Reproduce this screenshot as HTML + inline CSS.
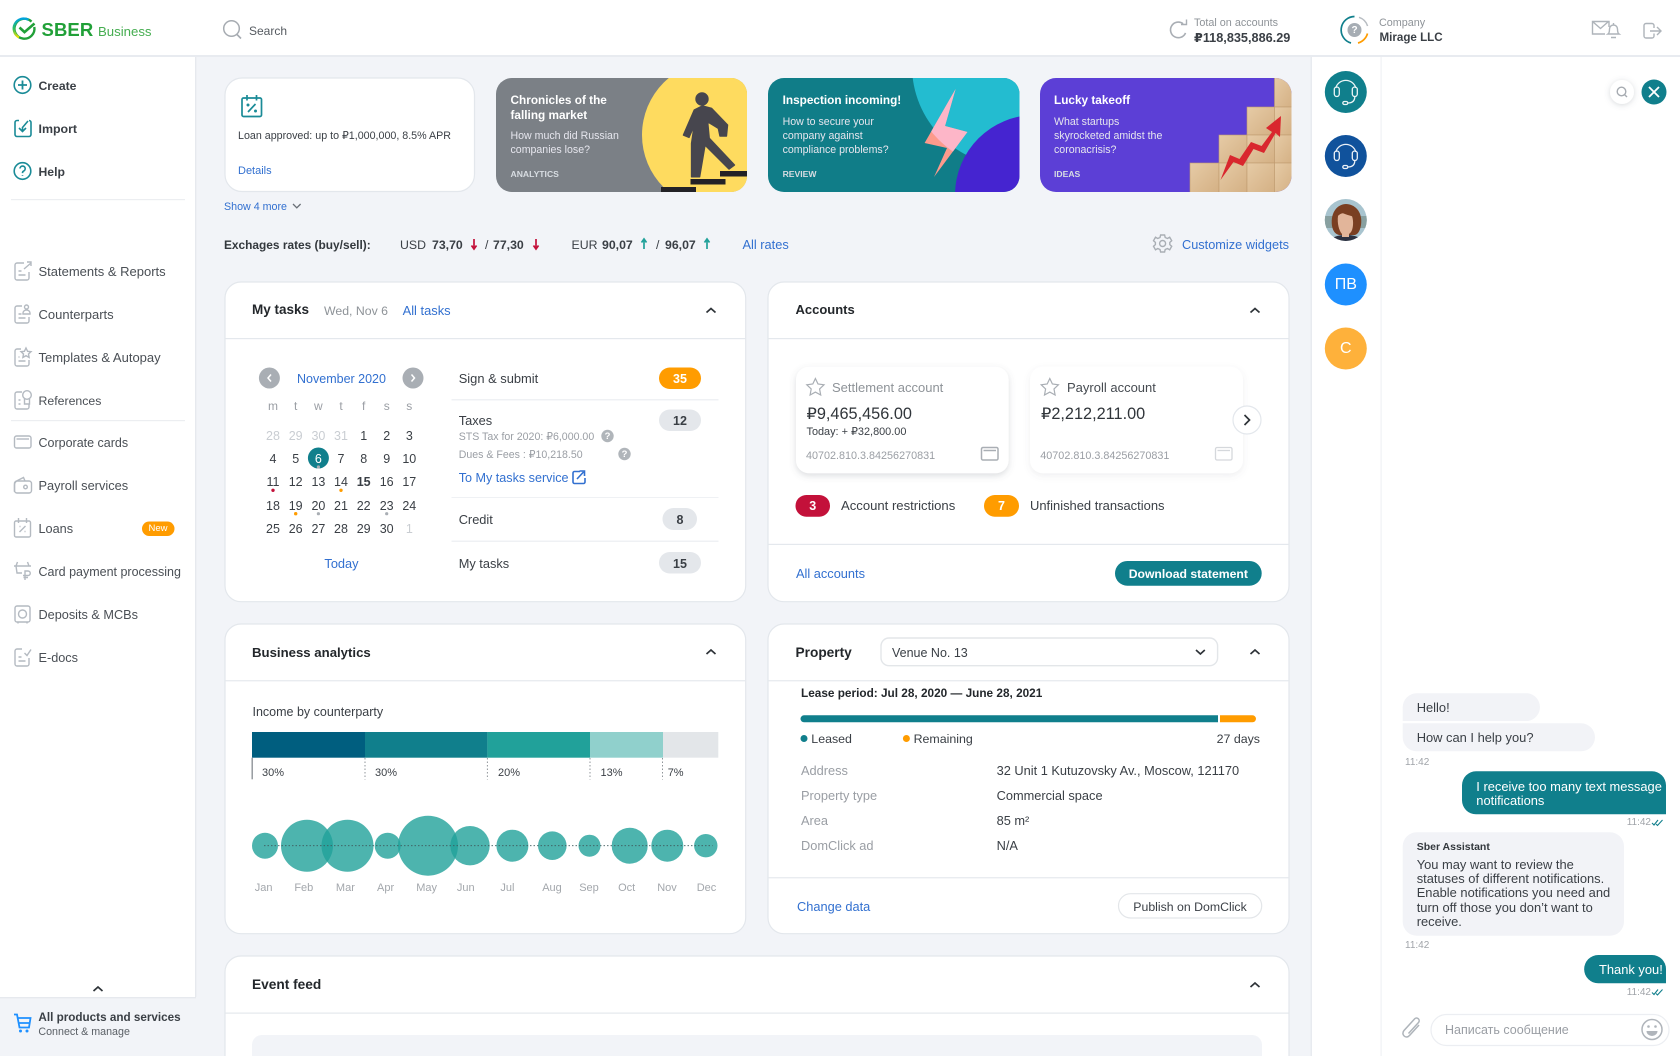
<!DOCTYPE html>
<html lang="en"><head><meta charset="utf-8"><title>SBER Business</title>
<style>
html,body{margin:0;padding:0;width:1680px;height:1056px;overflow:hidden;background:#f2f4f8}
body{font-family:"Liberation Sans","DejaVu Sans",sans-serif;color:#3a3f45;font-size:12.8px;position:relative}
svg.bg{position:absolute;left:0;top:0}
.t{position:absolute;white-space:nowrap;line-height:16px;height:16px;margin-top:-7.5px}
.c{transform:translateX(-50%)}
.b{font-weight:700}
.l{color:#3270d0}
.g{color:#9a9ea4}
.d{color:#23272b}
.p{font-size:10.6px;color:#e6e6ee}
.h{font-size:11.8px;font-weight:700;color:#fff}
.s{font-size:8.6px;font-weight:700;color:#d8dde2}
.n{font-size:12.7px;left:38.5px;color:#4a4f55}
.m{font-size:12.5px;color:#3a3f45}
.f{font-size:12.5px;color:#c9cdd2}
.mo{font-size:11px;color:#a3a7ac}
.chat{font-size:12.9px;color:#3a3f45}
.tm{font-size:10px;color:#a0a4a9}
.w{color:#fff!important}
</style></head><body>
<svg class="bg" width="1680" height="1056" viewBox="0 0 1680 1056" xmlns="http://www.w3.org/2000/svg">
<defs>
<filter id="sh" x="-10%" y="-15%" width="120%" height="135%"><feDropShadow dx="0" dy="2.5" stdDeviation="3.5" flood-color="#5a6672" flood-opacity=".22"/></filter>
<filter id="sh2" x="-10%" y="-15%" width="120%" height="135%"><feDropShadow dx="0" dy="2.5" stdDeviation="3.5" flood-color="#5a6672" flood-opacity=".1"/></filter>
<filter id="sh3" x="-40%" y="-40%" width="180%" height="180%"><feDropShadow dx="0" dy="1" stdDeviation="3" flood-color="#5a6672" flood-opacity=".25"/></filter>
<clipPath id="p1"><rect x="496" y="78" width="251" height="114" rx="16"/></clipPath>
<clipPath id="p2"><rect x="768" y="78" width="251.5" height="114" rx="16"/></clipPath>
<clipPath id="p3"><rect x="1040" y="78" width="251.5" height="114" rx="16"/></clipPath>
<clipPath id="cy"><circle cx="1012" cy="66" r="104"/></clipPath>
<clipPath id="av"><circle cx="1345.8" cy="220" r="21"/></clipPath>
<linearGradient id="lg" x1="0" y1="0" x2="0" y2="1"><stop offset="0" stop-color="#00a3e0"/><stop offset=".55" stop-color="#2fc05a"/><stop offset="1" stop-color="#efe100"/></linearGradient>
<linearGradient id="wd" x1="0" y1="0" x2="1" y2="1"><stop offset="0" stop-color="#e6cba6"/><stop offset="1" stop-color="#d4b084"/></linearGradient>
</defs>

<!-- header -->
<rect x="0" y="0" width="1680" height="55" fill="#fff"/>
<rect x="0" y="55" width="1680" height="2" fill="#e8ebf0"/>
<path d="M31.5 21.6A10 10 0 1 0 34.3 27" fill="none" stroke="#21a038" stroke-width="2.4"/>
<path d="M28.5 19.8A10 10 0 0 0 19 37.4" fill="none" stroke="url(#lg)" stroke-width="2.4"/>
<path d="M19.5 27.5l5 4.6 10-8.6" fill="none" stroke="#21a038" stroke-width="2.6"/>
<circle cx="231.5" cy="28.5" r="7.8" fill="none" stroke="#a6abb1" stroke-width="1.5"/><path d="M237 34.5l4 4" stroke="#a6abb1" stroke-width="1.6"/>
<path d="M1184.5 25.5A7.8 7.8 0 1 0 1184.5 35" fill="none" stroke="#a9aeb4" stroke-width="1.6" transform="rotate(-15 1177 30)"/><path d="M1181 24.5h5.5v-5" fill="none" stroke="#a9aeb4" stroke-width="1.4"/>
<path d="M1354.5 16.5A13.5 13.5 0 0 0 1351 43" fill="none" stroke="#107f8c" stroke-width="1.7"/>
<path d="M1358 43A13.5 13.5 0 0 0 1367.5 33.5" fill="none" stroke="#ff9c00" stroke-width="1.7"/>
<path d="M1359 17.3A13.5 13.5 0 0 1 1367.6 26" fill="none" stroke="#b8bdc2" stroke-width="1.5"/>
<circle cx="1354.5" cy="30" r="7" fill="#a6adb4"/>
<g fill="none" stroke="#aeb4ba" stroke-width="1.4">
<path d="M1605 34h-12.5V21.5h16.5V27M1592.5 21.5l8 7 8-7"/>
<path d="M1608 34c1.5-1 1.5-3 1.5-5a4 4 0 0 1 8 0c0 2 0 4 1.5 5zM1611 37.5h5M1613.5 23v2"/>
<path d="M1654 28v-2.5a2 2 0 0 0-2-2h-6a2 2 0 0 0-2 2V36a2 2 0 0 0 2 2h6a2 2 0 0 0 2-2v-2.5M1650 31h11M1657 27l4 4-4 4"/>
</g>

<!-- sidebar -->
<rect x="0" y="57" width="195" height="940" fill="#fff"/>
<rect x="195" y="57" width="1.4" height="940" fill="#e6e9ee"/>
<rect x="0" y="997" width="196" height="1.4" fill="#e6e9ee"/>
<rect x="11" y="199" width="174" height="1.2" fill="#eceef1"/>
<rect x="11" y="420" width="174" height="1.2" fill="#eceef1"/>
<g fill="none" stroke="#1a8b97" stroke-width="1.6">
<circle cx="22.5" cy="85" r="8.3"/><path d="M22.5 80.5v9M18 85h9" stroke-width="1.8"/>
<path d="M19 120.5h-2a2 2 0 0 0-2 2v12a2 2 0 0 0 2 2h12a2 2 0 0 0 2-2v-12a2 2 0 0 0-2-2M28 121l-5.5 6.5v4M19 128l3.5 3.5 3.5-3.5"/>
<circle cx="22.5" cy="171" r="8.3"/><path d="M20 168.5a2.6 2.6 0 1 1 3.5 2.6c-.8.4-1 1-1 2M22.5 175v.8"/>
</g>
<g fill="none" stroke="#b4bac1" stroke-width="1.4">
<g transform="translate(0,271)"><path d="M24-8h-7a2 2 0 0 0-2 2V7a2 2 0 0 0 2 2h10a2 2 0 0 0 2-2V1M18.5 0h3M18.5 4h7M24-2l7-6M27-9h4v4"/></g>
<g transform="translate(0,314)"><path d="M22-8h-5a2 2 0 0 0-2 2V7a2 2 0 0 0 2 2h10a2 2 0 0 0 2-2V3M18.5 0h3M18.5 4h7"/><circle cx="26.5" cy="-7" r="2"/><path d="M23-1a3.5 3 0 0 1 7 0v1h-7z"/></g>
<g transform="translate(0,357)"><path d="M21-8h-4a2 2 0 0 0-2 2V7a2 2 0 0 0 2 2h10a2 2 0 0 0 2-2V3M18.5 0h1M18.5 4h7M26-9l1.600 3.300 3.400.4-2.500 2.300.6 3.400-3.100-1.700-3.100 1.700.6-3.400-2.500-2.300 3.400-.4z"/></g>
<g transform="translate(0,400)"><path d="M22-8h-5a2 2 0 0 0-2 2V7a2 2 0 0 0 2 2h10a2 2 0 0 0 2-2V4M18.500 0h2M18.500 4h2"/><circle cx="27" cy="-5" r="4.300"/><path d="M24.500-1v5h5v-5"/></g>
<g transform="translate(0,442)"><rect x="14.500" y="-6" width="16.500" height="12" rx="2"/><path d="M16.500-3h12.500"/></g>
<g transform="translate(0,485)"><path d="M14.500 7V0c0-2 1-3.500 3-4.500l6-3 1.500 3.500"/><rect x="14.500" y="-4" width="17" height="12" rx="2.500"/><circle cx="25.500" cy="2" r="1.800"/></g>
<g transform="translate(0,528)"><rect x="14.500" y="-7" width="16" height="16" rx="1.500"/><path d="M18.500-10v5M26.500-10v5M19.500 4l6-6M19.500-1.500h1M24.500 3.500h1"/></g>
<g transform="translate(0,571)"><path d="M14-5h17M17.500-9l-1.500 4 1 7h5M27.500-9l1.500 4M25 9V0h3a2 2 0 0 1 0 4.500h-5M23.500 6.500h4.500"/></g>
<g transform="translate(0,614)"><rect x="15" y="-8" width="15" height="16" rx="2"/><circle cx="22.500" cy="0" r="4"/><path d="M18 8v1.500M27 8v1.500"/></g>
<g transform="translate(0,657)"><path d="M22-8h-5a2 2 0 0 0-2 2V7a2 2 0 0 0 2 2h10a2 2 0 0 0 2-2V1M18.500 0h3M18.500 4h7M24.500-4l2.500 2.500 4-6"/></g>
</g>
<rect x="142" y="521.500" width="32.500" height="14.500" rx="7.200" fill="#ff9c00"/>
<path d="M93.500 991l4.500-4 4.500 4" fill="none" stroke="#2e3338" stroke-width="1.700"/>
<g fill="none" stroke="#1e90ff" stroke-width="1.800"><path d="M14 1014.500h3l2.500 13h9.500l1.500-9.500h-13M19 1023h10"/></g>
<circle cx="20.500" cy="1031" r="1.500" fill="#1e90ff"/><circle cx="27" cy="1031" r="1.500" fill="#1e90ff"/>

<!-- right panels -->
<rect x="1311" y="57" width="369" height="1000" fill="#fff"/>
<rect x="1310.500" y="57" width="1.500" height="1000" fill="#e8ebf0"/>
<rect x="1380.500" y="57" width="1.200" height="1000" fill="#f0f2f5"/>
<circle cx="1345.800" cy="92" r="21" fill="#107f8c"/>
<circle cx="1345.800" cy="156" r="21" fill="#10529c"/>
<g fill="none" stroke="#fff" stroke-width="1.300" opacity=".92">
<g transform="translate(1345.800,90)"><path d="M-10-2A10.300 10 0 0 1 10-2"/><rect x="-11.500" y="-3" width="5" height="9.500" rx="2.500"/><rect x="6.500" y="-3" width="5" height="9.500" rx="2.500"/><path d="M9 6.500c0 5-3 6.500-7 6.500"/><rect x="-3" y="11.500" width="5" height="3" rx="1.500"/></g>
<g transform="translate(1345.800,154)"><path d="M-10-2A10.300 10 0 0 1 10-2"/><rect x="-11.500" y="-3" width="5" height="9.500" rx="2.500"/><rect x="6.500" y="-3" width="5" height="9.500" rx="2.500"/><path d="M9 6.500c0 5-3 6.500-7 6.500"/><rect x="-3" y="11.500" width="5" height="3" rx="1.500"/></g>
</g>
<g clip-path="url(#av)">
<rect x="1324" y="198" width="44" height="44" fill="#a8c4cf"/>
<rect x="1324" y="216" width="44" height="12" fill="#88a0a0"/>
<path d="M1330 243c0-6 8-8 16-8s16 2 16 8z" fill="#2c3140"/>
<path d="M1332 226c-2-14 6-22 14-22s17 7 15 21c-1 6-3 9-6 10h-16c-4-1-6-4-7-9z" fill="#7a3f22"/>
<path d="M1338 216c3-4 11-4 14 0 2 6 1 13-1 16-2 3-6 4-9 2-3-3-5-11-4-18z" fill="#e2b59a"/>
<path d="M1340 211c4 4 10 4 17 7-1-7-6-11-10-11s-7 2-7 4z" fill="#7a3f22"/>
<rect x="1342" y="233" width="7" height="4" fill="#e2b59a"/>
</g>
<circle cx="1345.800" cy="284.500" r="21" fill="#1e90ff"/>
<circle cx="1345.800" cy="348.500" r="21" fill="#feb13b"/>
<circle cx="1622" cy="92" r="12" fill="#fff" filter="url(#sh3)"/>
<circle cx="1621.500" cy="91.500" r="4.300" fill="none" stroke="#a6abb1" stroke-width="1.400"/><path d="M1624.700 94.700l2.300 2.300" stroke="#a6abb1" stroke-width="1.400"/>
<circle cx="1654" cy="92" r="12.500" fill="#107f8c"/><path d="M1649 87l10 10M1659 87l-10 10" stroke="#fff" stroke-width="1.800"/>

<!-- chat -->
<path d="M1402.700 707.300a14 14 0 0 1 14-14H1528a14 14 0 0 1 0 27.700H1402.700z" fill="#f2f3f7"/>
<path d="M1402.700 723.300H1581a14 14 0 0 1 0 28H1416.700a14 14 0 0 1-14-14z" fill="#f2f3f7"/>
<path d="M1476 771.300h176a14 14 0 0 1 14 14v29h-190a14 14 0 0 1-14-14v-15a14 14 0 0 1 14-14z" fill="#107f8c"/>
<path d="M1402.700 846.300a14 14 0 0 1 14-14H1610a14 14 0 0 1 14 14v75.400a14 14 0 0 1-14 14H1416.700a14 14 0 0 1-14-14z" fill="#f2f3f7"/>
<path d="M1598.300 955H1652a14 14 0 0 1 14 14v14.300h-67.700a14 14 0 0 1 0-28.300z" fill="#107f8c"/>
<g fill="none" stroke="#107f8c" stroke-width="1.100"><path d="M1652 823l2 2 4-5M1656 824l1.500 1.500 5-5.500M1652 992.500l2 2 4-5M1656 993.500l1.500 1.500 5-5.500"/></g>
<path d="M1417.500 1023l-9.500 10.500c-3.500 4-9-1-5.500-5l10.500-11.500c2.300-2.700 6.300.8 4 3.500l-10 11" fill="none" stroke="#aeb4ba" stroke-width="1.500" transform="translate(1.500,2)"/>
<rect x="1431" y="1014.500" width="238" height="31" rx="15.500" fill="#fff" stroke="#eceef2" stroke-width="1.200"/>
<circle cx="1652" cy="1029.500" r="10" fill="none" stroke="#b0b5bb" stroke-width="1.500"/>
<circle cx="1648.500" cy="1026.500" r="1.300" fill="#b0b5bb"/><circle cx="1655.500" cy="1026.500" r="1.300" fill="#b0b5bb"/>
<path d="M1646.500 1031h11a5.500 5 0 0 1-11 0z" fill="#b0b5bb"/>

<!-- loan card -->
<rect x="225" y="78" width="249.500" height="113.500" rx="17" fill="#fff" stroke="#e3e7ec" stroke-width="1.200"/>
<g fill="none" stroke="#1a8b97" stroke-width="1.700"><rect x="242" y="98" width="19.500" height="18.500" rx="1.500"/><path d="M247 95v5.500M256.500 95v5.500M248 112l7.500-8"/></g>
<circle cx="248" cy="105" r="1.500" fill="#1a8b97"/><circle cx="255.500" cy="111" r="1.500" fill="#1a8b97"/>
<path d="M293 204l3.800 3.800 3.800-3.800" fill="none" stroke="#6a7077" stroke-width="1.300"/>

<!-- promo 1 -->
<g clip-path="url(#p1)">
<rect x="496" y="78" width="251" height="114" fill="#7b8086"/>
<circle cx="716" cy="135" r="74" fill="#fedb5f"/>
<rect x="720" y="78" width="30" height="114" fill="#fedb5f"/>
<circle cx="702" cy="99" r="6.700" fill="#47464e"/>
<polygon points="702.300,106 711.400,108.300 727.500,125 726.400,136 720,136 718.400,128.300 707.600,121.700 709.200,138.300 734.400,165 729,169 705,145 699.600,176.700 691.600,176.700 691.600,143.300 694.300,125 689,137.300 683.500,135 694.300,110" fill="#47464e" stroke="#47464e" stroke-width="1.500" stroke-linejoin="round"/>
<rect x="661" y="187" width="35" height="5" fill="#232226"/>
<rect x="690.500" y="179" width="35" height="5.500" fill="#232226"/>
<rect x="720" y="171" width="28" height="5.500" fill="#232226"/>
</g>

<!-- promo 2 -->
<g clip-path="url(#p2)">
<rect x="768" y="78" width="252" height="114" fill="#107d88"/>
<circle cx="1012" cy="66" r="100" fill="#23bcd0"/>
<circle cx="1035" cy="195" r="80" fill="#4524d0"/>
<polygon points="955.600,89 924.600,143 947,148 934,177 967.400,132 945,126" fill="#fc9a8c"/>
<polygon points="955.600,89 924.600,143 947,148 934,177 967.400,132 945,126" fill="#fdb6c8" clip-path="url(#cy)"/>
</g>

<!-- promo 3 -->
<g clip-path="url(#p3)">
<rect x="1040" y="78" width="252" height="114" fill="#5c3fd6"/>
<g fill="url(#wd)" stroke="#be9a6e" stroke-width=".6">
<rect x="1274.500" y="76" width="18" height="31"/>
<rect x="1247" y="107" width="27.500" height="28"/><rect x="1274.500" y="107" width="18" height="28"/>
<rect x="1219" y="135" width="28" height="28"/><rect x="1247" y="135" width="27.500" height="28"/><rect x="1274.500" y="135" width="18" height="28"/>
<rect x="1190" y="163" width="29" height="30"/><rect x="1219" y="163" width="28" height="30"/><rect x="1247" y="163" width="27.500" height="30"/><rect x="1274.500" y="163" width="18" height="30"/>
</g>
<polygon points="1220.500,180 1230,155 1239.500,159 1251,142 1261.600,146 1272,132 1266,128 1281,116 1280,137 1275.600,133 1264,153 1253.500,149 1243,166 1233.500,162" fill="#d9272e"/>
</g>

<!-- rates -->
<g fill="none" stroke-width="1.700">
<g stroke="#c3113a"><path d="M474 239v10M471.500 245.500l2.500 3.500 2.500-3.500"/><path d="M536 239v10M533.500 245.500l2.500 3.500 2.500-3.500"/></g>
<g stroke="#21a19a"><path d="M644 249v-10M641.500 242.500l2.500-3.500 2.500 3.500"/><path d="M707 249v-10M704.500 242.500l2.500-3.500 2.500 3.500"/></g>
</g>
<g transform="translate(1162.600,243.500)" fill="none" stroke="#a9aeb4" stroke-width="1.400"><circle r="3"/><path d="M-2-8.500h4l.6 2.500 2.300 1 2.200-1.300 2 3.500-1.900 1.700v2.200l1.900 1.700-2 3.500-2.200-1.300-2.300 1-.6 2.500h-4l-.6-2.500-2.300-1-2.200 1.300-2-3.500 1.900-1.700v-2.200l-1.900-1.700 2-3.500 2.200 1.300 2.300-1z"/></g>

<!-- task card -->
<rect x="225" y="282" width="520.700" height="319.700" rx="16" fill="#fff" stroke="#e3e7ec" stroke-width="1.200"/>
<rect x="225.500" y="338" width="519.700" height="1.200" fill="#e4e8ed"/>
<path d="M706.500 312.500l4.500-4 4.500 4" fill="none" stroke="#2e3338" stroke-width="1.700"/>
<circle cx="269.400" cy="378" r="10.500" fill="#a9aeb4"/><circle cx="413" cy="378" r="10.500" fill="#a9aeb4"/>
<path d="M271 374.500l-3 3.500 3 3.500M411.500 374.500l3 3.500-3 3.500" fill="none" stroke="#fff" stroke-width="1.500"/>
<circle cx="318.400" cy="458" r="10.500" fill="#107f8c"/>
<circle cx="318.400" cy="467" r="1.600" fill="#a9aeb4"/>
<circle cx="273" cy="490.300" r="1.700" fill="#c3113a"/><circle cx="341" cy="490.300" r="1.700" fill="#ff9c00"/>
<circle cx="295.700" cy="513.700" r="1.700" fill="#ff9c00"/><circle cx="318.400" cy="513.700" r="1.600" fill="#a9aeb4"/><circle cx="386.700" cy="513.700" r="1.600" fill="#a9aeb4"/>
<rect x="659" y="367.500" width="42" height="21.500" rx="10.700" fill="#ff9c00"/>
<rect x="659" y="409.500" width="42" height="21.500" rx="10.700" fill="#e4e7eb"/>
<rect x="662.500" y="508" width="34.500" height="22" rx="11" fill="#e4e7eb"/>
<rect x="659" y="552" width="42" height="21.500" rx="10.700" fill="#e4e7eb"/>
<rect x="451.500" y="399" width="267" height="1.500" fill="#eff1f4"/>
<rect x="451.500" y="497" width="267" height="1" fill="#eff1f4"/>
<rect x="451.500" y="540.500" width="267" height="1.500" fill="#eff1f4"/>
<circle cx="607.500" cy="436" r="6.200" fill="#b0b5ba"/><circle cx="624.500" cy="454" r="6.200" fill="#b0b5ba"/>
<g fill="none" stroke="#3270d0" stroke-width="1.600"><path d="M580 471.500h-5.500a1.500 1.500 0 0 0-1.500 1.500v9a1.500 1.500 0 0 0 1.500 1.500h9a1.500 1.500 0 0 0 1.500-1.500v-4"/><path d="M577 479l6.500-7M579.500 471h5v5"/></g>

<!-- accounts -->
<rect x="768" y="282" width="521" height="319.700" rx="16" fill="#fff" stroke="#e3e7ec" stroke-width="1.200"/>
<rect x="768.500" y="338" width="520" height="1.200" fill="#e4e8ed"/>
<rect x="768.500" y="543.800" width="520" height="1.200" fill="#e4e8ed"/>
<path d="M1250.500 312.500l4.500-4 4.500 4" fill="none" stroke="#2e3338" stroke-width="1.700"/>
<rect x="796" y="366.700" width="212.600" height="106.600" rx="13" fill="#fff" filter="url(#sh)"/>
<rect x="1030" y="366.700" width="213" height="106.600" rx="13" fill="#fff" filter="url(#sh2)"/>
<g fill="none" stroke="#a9aeb4" stroke-width="1.200">
<path d="M815.400 378.500l2.600 5.500 6 .8-4.400 4.200 1.100 6-5.300-2.900-5.300 2.900 1.100-6-4.400-4.200 6-.8z"/>
<path d="M1049.800 378.500l2.600 5.500 6 .8-4.400 4.200 1.100 6-5.300-2.900-5.300 2.900 1.100-6-4.400-4.200 6-.8z"/>
<g stroke-width="1.500"><rect x="981.500" y="447.500" width="16.500" height="12.500" rx="1.500"/><path d="M983.500 450.500h12.500"/></g>
<g stroke="#d5d8dc" stroke-width="1.300"><rect x="1215.500" y="447.500" width="16.500" height="12.500" rx="1.500"/><path d="M1217.500 450.500h12.500"/></g>
</g>
<circle cx="1247" cy="420" r="14" fill="#fff" stroke="#e3e7ec" stroke-width="1.200"/>
<path d="M1244.500 415l5 5-5 5" fill="none" stroke="#2e3338" stroke-width="1.700"/>
<rect x="795.500" y="495" width="34.500" height="21.700" rx="10.800" fill="#c3113a"/>
<rect x="984" y="495" width="35" height="21.700" rx="10.800" fill="#ff9c00"/>
<rect x="1115" y="561" width="146.700" height="24.700" rx="12.300" fill="#107f8c"/>

<!-- analytics -->
<rect x="225" y="624" width="520.700" height="309.700" rx="16" fill="#fff" stroke="#e3e7ec" stroke-width="1.200"/>
<rect x="225.500" y="680" width="519.700" height="1.400" fill="#e9ecf0"/>
<path d="M706.500 654l4.500-4 4.500 4" fill="none" stroke="#2e3338" stroke-width="1.700"/>
<rect x="252" y="732" width="113" height="25.700" fill="#005e7f"/>
<rect x="365" y="732" width="122.400" height="25.700" fill="#107f8c"/>
<rect x="487.400" y="732" width="102.600" height="25.700" fill="#21a19a"/>
<rect x="590" y="732" width="73" height="25.700" fill="#90d0cc"/>
<rect x="663" y="732" width="55.300" height="25.700" fill="#e3e6e9"/>
<rect x="251.500" y="757.700" width="1.400" height="21.600" fill="#8f9499"/>
<g stroke="#8f9499" stroke-width="1" stroke-dasharray="1.500 2"><path d="M365 758v21.500M487.400 758v21.500M590 758v21.500M662.500 758v21.500"/></g>
<g fill="#21a19a" fill-opacity=".8">
<circle cx="265" cy="845.700" r="13"/><circle cx="307" cy="845.700" r="26"/><circle cx="347.500" cy="845.700" r="26"/><circle cx="387.700" cy="845.700" r="13"/><circle cx="428" cy="845.700" r="30"/><circle cx="470" cy="845.700" r="19.700"/><circle cx="512.400" cy="845.700" r="16"/><circle cx="552.300" cy="845.700" r="14.300"/><circle cx="589.500" cy="845.700" r="11"/><circle cx="629.700" cy="845.700" r="18"/><circle cx="667.300" cy="845.700" r="16"/><circle cx="705.800" cy="845.700" r="11.700"/>
</g>
<path d="M264 845.700H712.600" stroke="#3e5a5c" stroke-width=".9" stroke-dasharray="1.500 2"/>

<!-- property -->
<rect x="768" y="624" width="521" height="309.700" rx="16" fill="#fff" stroke="#e3e7ec" stroke-width="1.200"/>
<rect x="768.500" y="680" width="520" height="1.400" fill="#e9ecf0"/>
<rect x="768.500" y="877" width="520" height="1.400" fill="#e9ecf0"/>
<rect x="881" y="638" width="336.600" height="27.700" rx="8" fill="#fff" stroke="#e3e6e9" stroke-width="1.400"/>
<path d="M1196 650l4.400 4 4.400-4M1250.500 654l4.500-4 4.500 4" fill="none" stroke="#2e3338" stroke-width="1.700"/>
<path d="M804 715.300H1218v7H804a3.500 3.500 0 0 1 0-7z" fill="#107f8c"/>
<path d="M1220 715.300h32.500a3.500 3.500 0 0 1 0 7H1220z" fill="#ff9c00"/>
<circle cx="804" cy="738.500" r="3.500" fill="#107f8c"/><circle cx="906.400" cy="738.500" r="3.500" fill="#ff9c00"/>
<rect x="1118.500" y="893.700" width="143.200" height="24.300" rx="12.100" fill="#fff" stroke="#e3e6e9" stroke-width="1.200"/>

<!-- event -->
<rect x="225" y="956" width="1064" height="120" rx="16" fill="#fff" stroke="#e3e7ec" stroke-width="1.200"/>
<rect x="225.500" y="1012.500" width="1063" height="1.200" fill="#e4e8ed"/>
<path d="M1250.500 987l4.500-4 4.500 4" fill="none" stroke="#2e3338" stroke-width="1.700"/>
<rect x="252" y="1035" width="1010" height="40" rx="10" fill="#f2f4f8"/>
</svg>

<!-- TEXT -->
<div class="t b" style="left:41.500px;top:29.500px;font-size:18.500px;color:#21a038;letter-spacing:.1px">SBER</div>
<div class="t" style="left:98px;top:31px;font-size:13.200px;color:#45ad50">Business</div>
<div class="t" style="left:249px;top:30px;font-size:12px;color:#555a60">Search</div>
<div class="t" style="left:1194px;top:22px;font-size:10.800px;color:#8e9398">Total on accounts</div>
<div class="t b" style="left:1194px;top:37px;font-size:12.700px;color:#3a3f45">₽118,835,886.29</div>
<div class="t" style="left:1379px;top:22px;font-size:10.800px;color:#8e9398">Company</div>
<div class="t b" style="left:1379.500px;top:37px;font-size:11.600px;color:#3a3f45">Mirage LLC</div>
<div class="t b w c" style="left:1354.500px;top:30px;font-size:10px">?</div>

<div class="t b" style="left:38.500px;top:85px;font-size:12.200px">Create</div>
<div class="t b" style="left:38.500px;top:128px;font-size:12.400px">Import</div>
<div class="t b" style="left:38.500px;top:171px;font-size:12.200px">Help</div>
<div class="t n" style="top:271px;font-size:13px">Statements &amp; Reports</div>
<div class="t n" style="top:314px;font-size:13px">Counterparts</div>
<div class="t n" style="top:357px;font-size:13px">Templates &amp; Autopay</div>
<div class="t n" style="top:400px;font-size:12.300px">References</div>
<div class="t n" style="top:442.500px;font-size:12.500px">Corporate cards</div>
<div class="t n" style="top:485px;font-size:12.800px">Payroll services</div>
<div class="t n" style="top:528px">Loans</div>
<div class="t n" style="top:571px;font-size:12.500px">Card payment processing</div>
<div class="t n" style="top:614px">Deposits &amp; MCBs</div>
<div class="t n" style="top:657px">E-docs</div>
<div class="t c w" style="left:158px;top:528.500px;font-size:9.500px">New</div>
<div class="t b" style="left:38.400px;top:1017px;font-size:11.700px;color:#3a3f45">All products and services</div>
<div class="t" style="left:38.400px;top:1031px;font-size:10.700px;color:#5a5f65">Connect &amp; manage</div>

<div class="t" style="left:238px;top:135px;font-size:10.700px">Loan approved: up to ₽1,000,000, 8.5% APR</div>
<div class="t l" style="left:238px;top:170px;font-size:11px">Details</div>
<div class="t l" style="left:224px;top:206px;font-size:10.700px">Show 4 more</div>

<div class="t h" style="left:510.500px;top:99px">Chronicles of the</div>
<div class="t h" style="left:510.500px;top:114px">falling market</div>
<div class="t p" style="left:510.500px;top:135px">How much did Russian</div>
<div class="t p" style="left:510.500px;top:149px">companies lose?</div>
<div class="t s" style="left:510.500px;top:173px">ANALYTICS</div>
<div class="t h" style="left:782.600px;top:99px">Inspection incoming!</div>
<div class="t p" style="left:782.600px;top:121px">How to secure your</div>
<div class="t p" style="left:782.600px;top:135px">company against</div>
<div class="t p" style="left:782.600px;top:149px">compliance problems?</div>
<div class="t s" style="left:782.600px;top:173px">REVIEW</div>
<div class="t h" style="left:1054px;top:99px">Lucky takeoff</div>
<div class="t p" style="left:1054px;top:121px">What startups</div>
<div class="t p" style="left:1054px;top:135px">skyrocketed amidst the</div>
<div class="t p" style="left:1054px;top:149px">coronacrisis?</div>
<div class="t s" style="left:1054px;top:173px">IDEAS</div>

<div class="t b" style="left:224px;top:244px;font-size:11.900px;color:#33383d">Exchages rates (buy/sell):</div>
<div class="t" style="left:400px;top:244px;font-size:12.300px">USD</div>
<div class="t b" style="left:432px;top:244px;font-size:12.300px">73,70</div>
<div class="t" style="left:485px;top:244px;font-size:12.300px">/</div>
<div class="t b" style="left:493px;top:244px;font-size:12.300px">77,30</div>
<div class="t" style="left:571.500px;top:244px;font-size:12.300px">EUR</div>
<div class="t b" style="left:602px;top:244px;font-size:12.300px">90,07</div>
<div class="t" style="left:656px;top:244px;font-size:12.300px">/</div>
<div class="t b" style="left:665px;top:244px;font-size:12.300px">96,07</div>
<div class="t l" style="left:742.500px;top:244px;font-size:12.800px">All rates</div>
<div class="t l" style="left:1182px;top:244px;font-size:12.750px">Customize widgets</div>

<div class="t b d" style="left:252px;top:309px;font-size:13.500px">My tasks</div>
<div class="t" style="left:324px;top:310px;font-size:12.300px;color:#8e9398">Wed, Nov 6</div>
<div class="t l" style="left:402.600px;top:310px;font-size:12.900px">All tasks</div>
<div class="t l c" style="left:341.500px;top:378px;font-size:12.500px">November 2020</div>
<div class="t c g" style="left:273px;top:405.500px;font-size:12px">m</div><div class="t c g" style="left:295.700px;top:405.500px;font-size:12px">t</div><div class="t c g" style="left:318.400px;top:405.500px;font-size:12px">w</div><div class="t c g" style="left:341px;top:405.500px;font-size:12px">t</div><div class="t c g" style="left:363.700px;top:405.500px;font-size:12px">f</div><div class="t c g" style="left:386.700px;top:405.500px;font-size:12px">s</div><div class="t c g" style="left:409.300px;top:405.500px;font-size:12px">s</div>
<div class="t c f" style="left:273px;top:435px">28</div><div class="t c f" style="left:295.700px;top:435px">29</div><div class="t c f" style="left:318.400px;top:435px">30</div><div class="t c f" style="left:341px;top:435px">31</div><div class="t c m" style="left:363.700px;top:435px">1</div><div class="t c m" style="left:386.700px;top:435px">2</div><div class="t c m" style="left:409.300px;top:435px">3</div>
<div class="t c m" style="left:273px;top:458.500px">4</div><div class="t c m" style="left:295.700px;top:458.500px">5</div><div class="t c w" style="left:318.400px;top:458.500px;font-size:12.500px">6</div><div class="t c m" style="left:341px;top:458.500px">7</div><div class="t c m" style="left:363.700px;top:458.500px">8</div><div class="t c m" style="left:386.700px;top:458.500px">9</div><div class="t c m" style="left:409.300px;top:458.500px">10</div>
<div class="t c m" style="left:273px;top:481.500px">11</div><div class="t c m" style="left:295.700px;top:481.500px">12</div><div class="t c m" style="left:318.400px;top:481.500px">13</div><div class="t c m" style="left:341px;top:481.500px">14</div><div class="t c m b" style="left:363.700px;top:481.500px">15</div><div class="t c m" style="left:386.700px;top:481.500px">16</div><div class="t c m" style="left:409.300px;top:481.500px">17</div>
<div class="t c m" style="left:273px;top:505px">18</div><div class="t c m" style="left:295.700px;top:505px">19</div><div class="t c m" style="left:318.400px;top:505px">20</div><div class="t c m" style="left:341px;top:505px">21</div><div class="t c m" style="left:363.700px;top:505px">22</div><div class="t c m" style="left:386.700px;top:505px">23</div><div class="t c m" style="left:409.300px;top:505px">24</div>
<div class="t c m" style="left:273px;top:528px">25</div><div class="t c m" style="left:295.700px;top:528px">26</div><div class="t c m" style="left:318.400px;top:528px">27</div><div class="t c m" style="left:341px;top:528px">28</div><div class="t c m" style="left:363.700px;top:528px">29</div><div class="t c m" style="left:386.700px;top:528px">30</div><div class="t c f" style="left:409.300px;top:528px">1</div>
<div class="t l c" style="left:341.500px;top:563px;font-size:12.800px">Today</div>

<div class="t" style="left:458.700px;top:378px;font-size:12.900px">Sign &amp; submit</div>
<div class="t" style="left:458.700px;top:420px">Taxes</div>
<div class="t g" style="left:458.700px;top:436px;font-size:10.600px">STS Tax for 2020: ₽6,000.00</div>
<div class="t g" style="left:458.700px;top:454px;font-size:10.600px">Dues &amp; Fees : ₽10,218.50</div>
<div class="t l" style="left:458.700px;top:477px;font-size:12.600px">To My tasks service</div>
<div class="t" style="left:458.700px;top:519px">Credit</div>
<div class="t" style="left:458.700px;top:563px">My tasks</div>
<div class="t b c w" style="left:680px;top:378px;font-size:12.500px">35</div>
<div class="t b c" style="left:680px;top:420px;font-size:12.500px">12</div>
<div class="t b c" style="left:680px;top:519px;font-size:12.500px">8</div>
<div class="t b c" style="left:680px;top:563px;font-size:12.500px">15</div>
<div class="t b w c" style="left:607.500px;top:436px;font-size:9.500px">?</div>
<div class="t b w c" style="left:624.500px;top:454px;font-size:9.500px">?</div>

<div class="t b d" style="left:795.500px;top:309px;font-size:13px">Accounts</div>
<div class="t" style="left:832px;top:387px;font-size:13px;color:#8e9398">Settlement account</div>
<div class="t" style="left:1067px;top:387px;font-size:13px;color:#464b51">Payroll account</div>
<div class="t" style="left:806.500px;top:413.500px;font-size:16.300px;color:#30353a">₽9,465,456.00</div>
<div class="t" style="left:1041px;top:413.500px;font-size:16.300px;color:#30353a">₽2,212,211.00</div>
<div class="t" style="left:806.500px;top:431.700px;font-size:10.900px">Today: + ₽32,800.00</div>
<div class="t g" style="left:806px;top:455.700px;font-size:10.800px">40702.810.3.84256270831</div>
<div class="t g" style="left:1040.300px;top:455.700px;font-size:10.800px">40702.810.3.84256270831</div>
<div class="t b w c" style="left:812.700px;top:505.500px;font-size:12.500px">3</div>
<div class="t" style="left:841px;top:505px;font-size:13.100px">Account restrictions</div>
<div class="t b w c" style="left:1001.500px;top:505.500px;font-size:12.500px">7</div>
<div class="t" style="left:1030px;top:505px;font-size:12.950px">Unfinished transactions</div>
<div class="t l" style="left:796px;top:573.500px">All accounts</div>
<div class="t b w c" style="left:1188.300px;top:573.500px;font-size:12.200px">Download statement</div>

<div class="t b d" style="left:252px;top:652px;font-size:13.200px">Business analytics</div>
<div class="t" style="left:252.500px;top:711.700px;font-size:12.500px">Income by counterparty</div>
<div class="t" style="left:262px;top:772px;font-size:11px">30%</div>
<div class="t" style="left:375px;top:772px;font-size:11px">30%</div>
<div class="t" style="left:498px;top:772px;font-size:11px">20%</div>
<div class="t" style="left:600.500px;top:772px;font-size:11px">13%</div>
<div class="t" style="left:667.700px;top:772px;font-size:11px">7%</div>
<div class="t c mo" style="left:263.600px;top:887.700px">Jan</div><div class="t c mo" style="left:303.800px;top:887.700px">Feb</div><div class="t c mo" style="left:345.400px;top:887.700px">Mar</div><div class="t c mo" style="left:385.600px;top:887.700px">Apr</div><div class="t c mo" style="left:426.600px;top:887.700px">May</div><div class="t c mo" style="left:465.800px;top:887.700px">Jun</div><div class="t c mo" style="left:507.400px;top:887.700px">Jul</div><div class="t c mo" style="left:552px;top:887.700px">Aug</div><div class="t c mo" style="left:589px;top:887.700px">Sep</div><div class="t c mo" style="left:626.700px;top:887.700px">Oct</div><div class="t c mo" style="left:667px;top:887.700px">Nov</div><div class="t c mo" style="left:706.500px;top:887.700px">Dec</div>

<div class="t b d" style="left:795.500px;top:652px;font-size:13.700px">Property</div>
<div class="t" style="left:892px;top:652px;font-size:12.500px">Venue No. 13</div>
<div class="t b d" style="left:801px;top:692px;font-size:11.800px">Lease period: Jul 28, 2020 — June 28, 2021</div>
<div class="t" style="left:811.300px;top:738.700px;font-size:12.400px">Leased</div>
<div class="t" style="left:913.600px;top:738.700px;font-size:12.400px">Remaining</div>
<div class="t" style="left:1216.600px;top:738.700px;font-size:12.400px">27 days</div>
<div class="t g" style="left:801px;top:770.700px">Address</div>
<div class="t g" style="left:801px;top:795.700px">Property type</div>
<div class="t g" style="left:801px;top:820.700px">Area</div>
<div class="t g" style="left:801px;top:845.700px">DomClick ad</div>
<div class="t" style="left:996.600px;top:770.700px">32 Unit 1 Kutuzovsky Av., Moscow, 121170</div>
<div class="t" style="left:996.600px;top:795.700px">Commercial space</div>
<div class="t" style="left:996.600px;top:820.700px">85 m²</div>
<div class="t" style="left:996.600px;top:845.700px">N/A</div>
<div class="t l" style="left:797px;top:906px">Change data</div>
<div class="t c" style="left:1190px;top:906px;font-size:12.300px">Publish on DomClick</div>
<div class="t b d" style="left:252px;top:984px;font-size:13.700px">Event feed</div>

<div class="t c w" style="left:1345.800px;top:284.500px;font-size:16px">ПВ</div>
<div class="t c w" style="left:1345.800px;top:348.500px;font-size:16px">С</div>

<div class="t chat" style="left:1416.700px;top:707.300px">Hello!</div>
<div class="t chat" style="left:1416.700px;top:737.700px">How can I help you?</div>
<div class="t tm" style="left:1405px;top:762px">11:42</div>
<div class="t chat w" style="left:1476.300px;top:786px">I receive too many text message</div>
<div class="t chat w" style="left:1476.300px;top:800px">notifications</div>
<div class="t tm" style="left:1626.700px;top:822.700px">11:42</div>
<div class="t b" style="left:1416.700px;top:846px;font-size:10.500px;color:#33383d">Sber Assistant</div>
<div class="t chat" style="left:1416.700px;top:864.300px">You may want to review the</div>
<div class="t chat" style="left:1416.700px;top:878.300px">statuses of different notifications.</div>
<div class="t chat" style="left:1416.700px;top:892.700px">Enable notifications you need and</div>
<div class="t chat" style="left:1416.700px;top:907px">turn off those you don’t want to</div>
<div class="t chat" style="left:1416.700px;top:921.300px">receive.</div>
<div class="t tm" style="left:1405px;top:945.700px">11:42</div>
<div class="t chat w" style="left:1599px;top:969px">Thank you!</div>
<div class="t tm" style="left:1626.700px;top:992px">11:42</div>
<div class="t" style="left:1445px;top:1029px;font-size:12.500px;color:#9a9ea4">Написать сообщение</div>
</body></html>
